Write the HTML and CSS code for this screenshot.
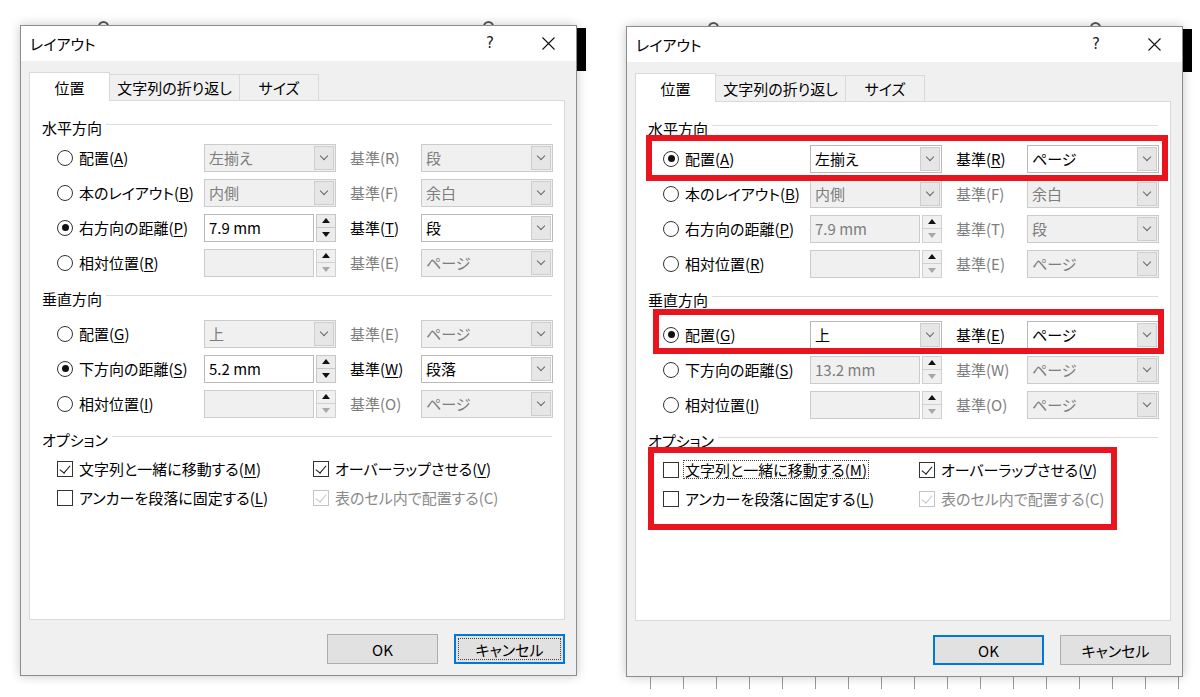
FILE: index.html
```html
<!DOCTYPE html>
<html lang="ja">
<head>
    <meta charset="UTF-8">
    <title>レイアウト</title>
    <link rel="stylesheet" href="styles.css">
</head>
<body>
<div class="screen">

    <!-- before: horizontal by distance -->
    <div class="shot">
        <span class="knob knob-a"></span>
        <span class="knob knob-b"></span>
        <div class="dialog">
            <div class="titlebar">
                <span class="title">レイアウト</span>
                <span class="help">?</span>
                <span class="close"><svg width="13" height="13" viewBox="0 0 13 13"><path d="M0.5 0.5L12.5 12.5M12.5 0.5L0.5 12.5" stroke="#111" stroke-width="1.1" fill="none"/></svg></span>
            </div>
            <div class="body">
                <div class="tabs">
                    <div class="tab tab-pos active">位置</div>
                    <div class="tab tab-wrap">文字列の折り返し</div>
                    <div class="tab tab-size">サイズ</div>
                </div>
                <div class="panel">
                    <div class="group first">
                        <div class="group-title"><span>水平方向</span></div>
                        <div class="row">
                            <div class="opt"><span class="radio"></span><span>配置(<u>A</u>)</span></div>
                            <div class="combo off"><span class="val">左揃え</span><span class="drop"></span></div>
                            <span class="ref off">基準(R)</span>
                            <div class="combo off"><span class="val">段</span><span class="drop"></span></div>
                        </div>
                        <div class="row">
                            <div class="opt"><span class="radio"></span><span>本のレイアウト(<u>B</u>)</span></div>
                            <div class="combo off"><span class="val">内側</span><span class="drop"></span></div>
                            <span class="ref off">基準(F)</span>
                            <div class="combo off"><span class="val">余白</span><span class="drop"></span></div>
                        </div>
                        <div class="row">
                            <div class="opt"><span class="radio on"></span><span>右方向の距離(<u>P</u>)</span></div>
                            <div class="spin"><span class="field">7.9 mm</span><span class="arrows"><i class="up"></i><i class="down"></i></span></div>
                            <span class="ref">基準(<u>T</u>)</span>
                            <div class="combo"><span class="val">段</span><span class="drop"></span></div>
                        </div>
                        <div class="row">
                            <div class="opt"><span class="radio"></span><span>相対位置(<u>R</u>)</span></div>
                            <div class="spin off"><span class="field"></span><span class="arrows"><i class="up"></i><i class="down"></i></span></div>
                            <span class="ref off">基準(E)</span>
                            <div class="combo off"><span class="val">ページ</span><span class="drop"></span></div>
                        </div>
                    </div>
                    <div class="group second">
                        <div class="group-title"><span>垂直方向</span></div>
                        <div class="row">
                            <div class="opt"><span class="radio"></span><span>配置(<u>G</u>)</span></div>
                            <div class="combo off"><span class="val">上</span><span class="drop"></span></div>
                            <span class="ref off">基準(E)</span>
                            <div class="combo off"><span class="val">ページ</span><span class="drop"></span></div>
                        </div>
                        <div class="row">
                            <div class="opt"><span class="radio on"></span><span>下方向の距離(<u>S</u>)</span></div>
                            <div class="spin"><span class="field">5.2 mm</span><span class="arrows"><i class="up"></i><i class="down"></i></span></div>
                            <span class="ref">基準(<u>W</u>)</span>
                            <div class="combo"><span class="val">段落</span><span class="drop"></span></div>
                        </div>
                        <div class="row">
                            <div class="opt"><span class="radio"></span><span>相対位置(<u>I</u>)</span></div>
                            <div class="spin off"><span class="field"></span><span class="arrows"><i class="up"></i><i class="down"></i></span></div>
                            <span class="ref off">基準(O)</span>
                            <div class="combo off"><span class="val">ページ</span><span class="drop"></span></div>
                        </div>
                    </div>
                    <div class="group options">
                        <div class="group-title"><span>オプション</span></div>
                        <div class="checks">
                            <div class="check-row"><span class="box on"></span><span>文字列と一緒に移動する(<u>M</u>)</span></div>
                            <div class="check-row"><span class="box on"></span><span>オーバーラップさせる(<u>V</u>)</span></div>
                            <div class="check-row"><span class="box"></span><span>アンカーを段落に固定する(<u>L</u>)</span></div>
                            <div class="check-row off"><span class="box on"></span><span>表のセル内で配置する(C)</span></div>
                        </div>
                    </div>
                </div>
                <div class="buttons">
                    <div class="btn">OK</div>
                    <div class="btn focus dotted">キャンセル</div>
                </div>
            </div>
        </div>
        <div class="edge"></div>
    </div>

    <!-- after: fixed placement to page -->
    <div class="shot right">
        <span class="knob knob-c"></span>
        <span class="knob knob-d"></span>
        <div class="stack">
            <div class="dialog">
                <div class="titlebar">
                    <span class="title">レイアウト</span>
                    <span class="help">?</span>
                    <span class="close"><svg width="13" height="13" viewBox="0 0 13 13"><path d="M0.5 0.5L12.5 12.5M12.5 0.5L0.5 12.5" stroke="#111" stroke-width="1.1" fill="none"/></svg></span>
                </div>
                <div class="body">
                    <div class="tabs">
                        <div class="tab tab-pos active">位置</div>
                        <div class="tab tab-wrap">文字列の折り返し</div>
                        <div class="tab tab-size">サイズ</div>
                    </div>
                    <div class="panel">
                        <div class="group first">
                            <div class="group-title"><span>水平方向</span></div>
                            <div class="row">
                                <div class="opt"><span class="radio on"></span><span>配置(<u>A</u>)</span></div>
                                <div class="combo"><span class="val">左揃え</span><span class="drop"></span></div>
                                <span class="ref">基準(<u>R</u>)</span>
                                <div class="combo"><span class="val">ページ</span><span class="drop"></span></div>
                            </div>
                            <div class="row">
                                <div class="opt"><span class="radio"></span><span>本のレイアウト(<u>B</u>)</span></div>
                                <div class="combo off"><span class="val">内側</span><span class="drop"></span></div>
                                <span class="ref off">基準(F)</span>
                                <div class="combo off"><span class="val">余白</span><span class="drop"></span></div>
                            </div>
                            <div class="row">
                                <div class="opt"><span class="radio"></span><span>右方向の距離(<u>P</u>)</span></div>
                                <div class="spin off"><span class="field">7.9 mm</span><span class="arrows"><i class="up"></i><i class="down"></i></span></div>
                                <span class="ref off">基準(T)</span>
                                <div class="combo off"><span class="val">段</span><span class="drop"></span></div>
                            </div>
                            <div class="row">
                                <div class="opt"><span class="radio"></span><span>相対位置(<u>R</u>)</span></div>
                                <div class="spin off"><span class="field"></span><span class="arrows"><i class="up"></i><i class="down"></i></span></div>
                                <span class="ref off">基準(E)</span>
                                <div class="combo off"><span class="val">ページ</span><span class="drop"></span></div>
                            </div>
                        </div>
                        <div class="group second">
                            <div class="group-title"><span>垂直方向</span></div>
                            <div class="row">
                                <div class="opt"><span class="radio on"></span><span>配置(<u>G</u>)</span></div>
                                <div class="combo"><span class="val">上</span><span class="drop"></span></div>
                                <span class="ref">基準(<u>E</u>)</span>
                                <div class="combo"><span class="val">ページ</span><span class="drop"></span></div>
                            </div>
                            <div class="row">
                                <div class="opt"><span class="radio"></span><span>下方向の距離(<u>S</u>)</span></div>
                                <div class="spin off"><span class="field">13.2 mm</span><span class="arrows"><i class="up"></i><i class="down"></i></span></div>
                                <span class="ref off">基準(W)</span>
                                <div class="combo off"><span class="val">ページ</span><span class="drop"></span></div>
                            </div>
                            <div class="row">
                                <div class="opt"><span class="radio"></span><span>相対位置(<u>I</u>)</span></div>
                                <div class="spin off"><span class="field"></span><span class="arrows"><i class="up"></i><i class="down"></i></span></div>
                                <span class="ref off">基準(O)</span>
                                <div class="combo off"><span class="val">ページ</span><span class="drop"></span></div>
                            </div>
                        </div>
                        <div class="group options">
                            <div class="group-title"><span>オプション</span></div>
                            <div class="checks">
                                <div class="check-row"><span class="box"></span><span class="focus-text">文字列と一緒に移動する(<u>M</u>)</span></div>
                                <div class="check-row"><span class="box on"></span><span>オーバーラップさせる(<u>V</u>)</span></div>
                                <div class="check-row"><span class="box"></span><span>アンカーを段落に固定する(<u>L</u>)</span></div>
                                <div class="check-row off"><span class="box on"></span><span>表のセル内で配置する(C)</span></div>
                            </div>
                        </div>
                    </div>
                    <div class="buttons">
                        <div class="btn focus">OK</div>
                        <div class="btn">キャンセル</div>
                    </div>
                </div>

                <!-- red annotation boxes -->
                <span class="mark mark-h"></span>
                <span class="mark mark-v"></span>
                <span class="mark mark-o"></span>
            </div>
            <div class="doc-grid"></div>
        </div>
        <div class="edge"></div>
    </div>

</div>
</body>
</html>
```

FILE: styles.css
```css
* {
    margin: 0;
    padding: 0;
    box-sizing: border-box;
}

body {
    width: 1200px;
    height: 697px;
    overflow: hidden;
    background: #fff;
    color: #000;
    font-family: "Noto Sans CJK JP", "Noto Sans", sans-serif;
    font-size: 15px;
    font-feature-settings: "palt";
    line-height: 1;
}

u {
    text-decoration: underline;
    text-underline-offset: 2px;
    text-decoration-thickness: 1px;
}

.screen {
    display: flex;
    align-items: flex-start;
    padding: 25px 0 0 20px;
}

/* one captured window */
.shot {
    position: relative;
    display: flex;
    align-items: flex-start;
}

.shot.right {
    margin-left: 40px;
    margin-top: 1px;
}

.stack {
    display: flex;
    flex-direction: column;
}

.edge {
    width: 9px;
    height: 43px;
    margin-top: 3px;
    background: #000;
}

/* ruler knobs peeking above the dialogs */
.knob {
    position: absolute;
    top: -4px;
    width: 11px;
    height: 11px;
    border: 2px solid #5a5a5a;
    border-radius: 50%;
    background: #fff;
}

.knob-a { left: 78px; }
.knob-b { left: 463px; }
.knob-c { left: 82px; }
.knob-d { left: 464px; }

.dialog {
    position: relative;
    z-index: 1;
    width: 557px;
    border: 1px solid #8c8c8c;
    background: #f0f0f0;
    box-shadow: 0 0 10px rgba(0, 0, 0, 0.22);
}

.titlebar {
    height: 35px;
    background: #fff;
    display: flex;
    align-items: center;
    padding: 0 5px 0 9px;
}

.title {
    flex: 1;
}

.help,
.close {
    width: 46px;
    display: flex;
    justify-content: center;
}

.help {
    margin-right: 12px;
    font-family: "DejaVu Sans", sans-serif;
    font-size: 15px;
    color: #222;
}

.body {
    padding: 11px 11px 11px 8px;
}

/* tabs */
.tabs {
    display: flex;
    align-items: flex-end;
    height: 28px;
}

.tab {
    height: 26px;
    border: 1px solid #d9d9d9;
    border-bottom: none;
    background: #f0f0f0;
    display: flex;
    align-items: center;
    justify-content: center;
    margin-left: -1px;
}

.tab.active {
    position: relative;
    z-index: 2;
    height: 29px;
    margin-bottom: -1px;
    margin-left: 0;
    background: #fff;
}

.tab-pos { width: 81px; }
.tab-wrap { width: 131px; }
.tab-size { width: 80px; }

.panel {
    height: 520px;
    background: #fff;
    border: 1px solid #d9d9d9;
}

.group.first { padding-top: 16px; }
.group.second { padding-top: 8px; }
.group.options { padding-top: 8px; }

.group-title {
    display: flex;
    align-items: center;
    height: 20px;
    padding: 0 12px;
    gap: 4px;
}

.group-title::after {
    content: "";
    flex: 1;
    height: 1px;
    margin-bottom: 6px;
    background: #dcdcdc;
}

.group.first .group-title { margin-bottom: 3px; }
.group.second .group-title { margin-bottom: 8px; }
.group.options .group-title { margin-bottom: 5px; }

/* radio rows */
.row {
    display: flex;
    align-items: center;
    height: 35px;
    padding-left: 27px;
}

.opt {
    width: 147px;
    display: flex;
    align-items: center;
    gap: 6px;
}

.radio {
    position: relative;
    width: 16px;
    height: 16px;
    border: 1px solid #333;
    border-radius: 50%;
    background: #fff;
    flex: none;
}

.radio.on::after {
    content: "";
    position: absolute;
    left: 3.5px;
    top: 3.5px;
    width: 7px;
    height: 7px;
    border-radius: 50%;
    background: #111;
}

.ref {
    width: 85px;
    padding-left: 14px;
}

.ref.off {
    color: #7d7d7d;
}

/* drop-down boxes */
.combo {
    width: 132px;
    height: 28px;
    display: flex;
    border: 1px solid #b9b9b9;
    background: #fff;
}

.combo.off {
    background: #f0f0f0;
    border-color: #cbcbcb;
    color: #7d7d7d;
}

.val {
    flex: 1;
    display: flex;
    align-items: center;
    padding-left: 4px;
}

.drop {
    width: 20px;
    margin: 1px 1px 1px 0;
    border: 1px solid #cdcdcd;
    background: #e6e6e6;
    display: flex;
    align-items: center;
    justify-content: center;
}

.drop::before {
    content: "";
    width: 5px;
    height: 5px;
    border-right: 1px solid #666;
    border-bottom: 1px solid #666;
    transform: translateY(-2px) rotate(45deg);
}

/* spin boxes */
.spin {
    width: 132px;
    height: 28px;
    display: flex;
}

.field {
    flex: 1;
    display: flex;
    align-items: center;
    padding-left: 4px;
    border: 1px solid #b9b9b9;
    background: #fff;
}

.spin.off .field {
    background: #f0f0f0;
    border-color: #cbcbcb;
    color: #7d7d7d;
}

.arrows {
    width: 20px;
    margin-left: 2px;
    display: flex;
    flex-direction: column;
}

.arrows i {
    flex: 1;
    border: 1px solid #c6c6c6;
    background: #ececec;
    display: flex;
    align-items: center;
    justify-content: center;
}

.arrows i + i {
    border-top: none;
}

.arrows .up::before,
.arrows .down::before {
    content: "";
    border-left: 4px solid transparent;
    border-right: 4px solid transparent;
}

.arrows .up::before {
    border-bottom: 5px solid #111;
}

.arrows .down::before {
    border-top: 5px solid #111;
}

.spin.off .arrows .down::before {
    border-top-color: #a8a8a8;
}

.spin.off .arrows i {
    background: #f0f0f0;
    border-color: #d0d0d0;
}

/* options */
.checks {
    display: grid;
    grid-template-columns: 256px auto;
    padding-left: 27px;
}

.check-row {
    height: 29px;
    display: flex;
    align-items: center;
    gap: 6px;
}

.check-row.off {
    color: #8a8a8a;
}

.box {
    position: relative;
    width: 16px;
    height: 16px;
    border: 1px solid #333;
    background: #fff;
    flex: none;
}

.box.on::after {
    content: "";
    position: absolute;
    left: 4px;
    top: 1px;
    width: 5px;
    height: 9px;
    border-right: 1.3px solid #111;
    border-bottom: 1.3px solid #111;
    transform: rotate(40deg);
}

.check-row.off .box {
    border-color: #c4c4c4;
}

.check-row.off .box.on::after {
    border-color: #c4c4c4;
}

.focus-text {
    outline: 1px dotted #444;
    outline-offset: 1px;
}

/* buttons */
.buttons {
    display: flex;
    justify-content: flex-end;
    gap: 16px;
    margin-top: 14px;
}

.btn {
    position: relative;
    width: 111px;
    height: 30px;
    border: 1px solid #adadad;
    background: #e1e1e1;
    display: flex;
    align-items: center;
    justify-content: center;
}

.btn.focus {
    border: 2px solid #0078d7;
}

.btn.dotted::after {
    content: "";
    position: absolute;
    inset: 2px;
    border: 1px dotted #444;
}

/* red annotation frames */
.mark {
    position: absolute;
    z-index: 3;
    border: 6px solid #e8151f;
}

.mark-h {
    left: 19px;
    top: 108px;
    width: 522px;
    height: 46px;
}

.mark-v {
    left: 26px;
    top: 282px;
    width: 511px;
    height: 45px;
}

.mark-o {
    left: 21px;
    top: 420px;
    width: 469px;
    height: 83px;
}

/* table grid of the document under the second dialog */
.doc-grid {
    height: 12px;
    margin-left: 24px;
    margin-right: 4px;
    background: repeating-linear-gradient(90deg, #9a9a9a 0 1px, transparent 1px 33px);
}
```
